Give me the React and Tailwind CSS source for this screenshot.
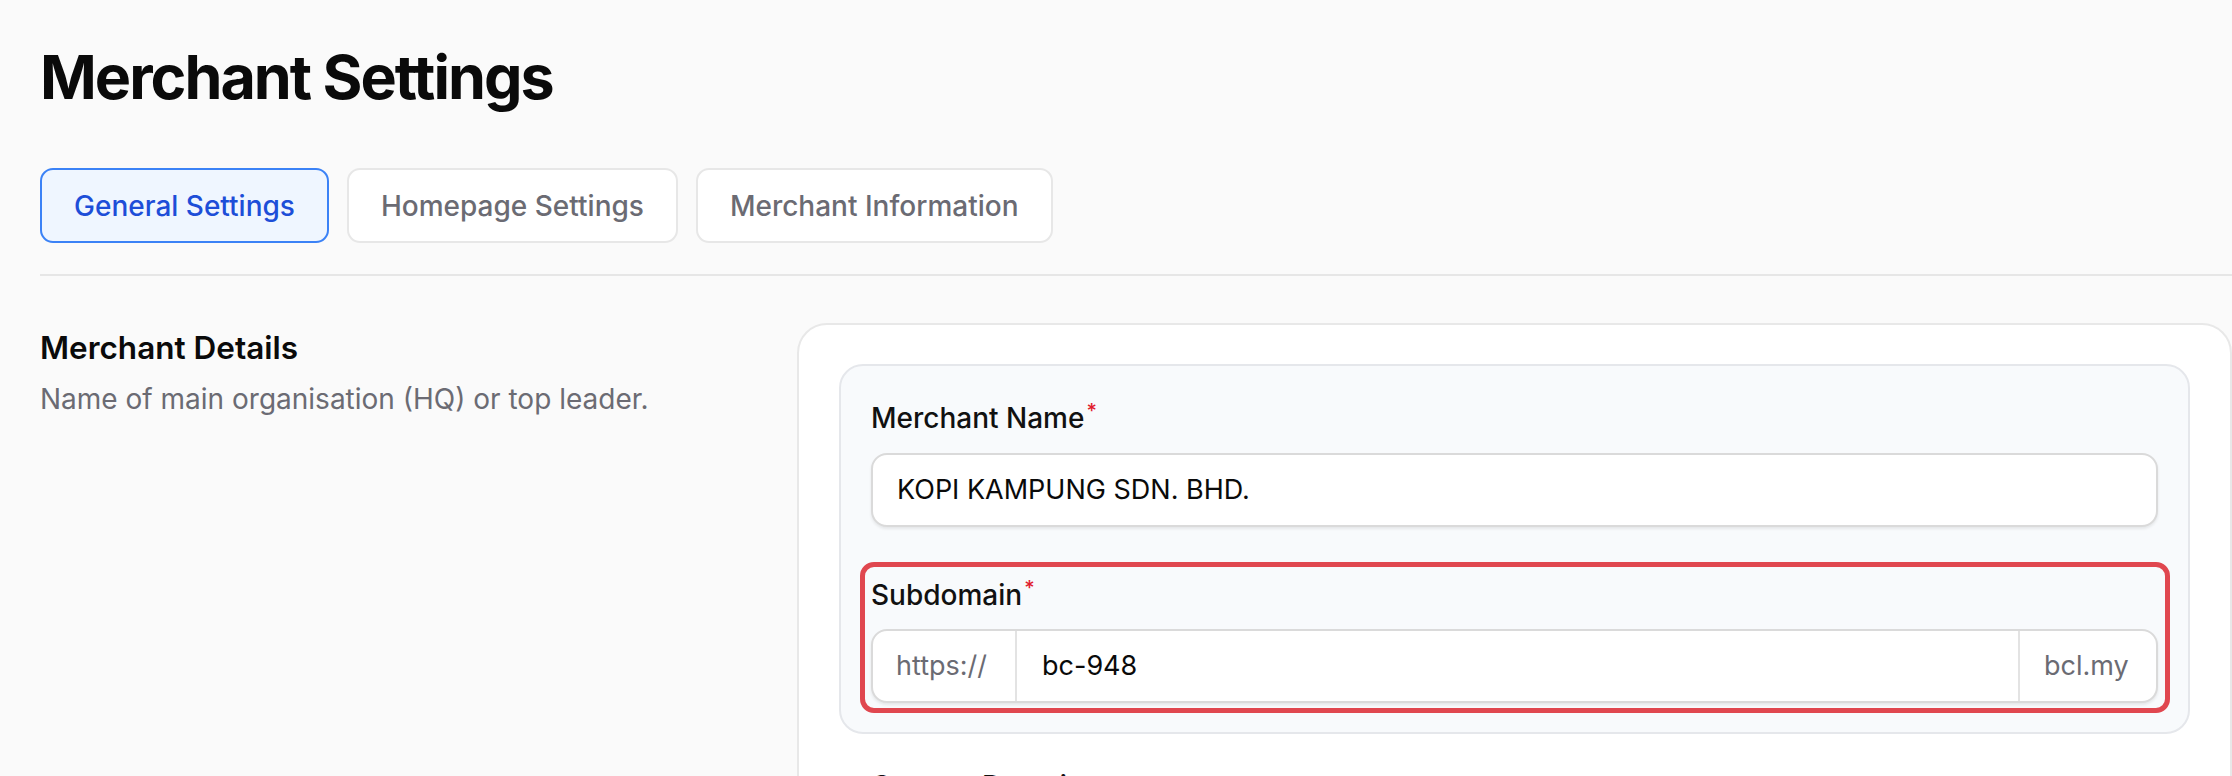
import React from "react";

function Label({ children, required = true }) {
  return (
    <div className="text-[28px] leading-[40px] font-medium text-[#111111]">
      {children}
      {required && (
        <span className="ml-[2px] align-super text-[20px] leading-none text-[#e11d2e]">*</span>
      )}
    </div>
  );
}

export default function App() {
  return (
    <div
      className="h-screen overflow-hidden bg-[#fafafa] pl-[40px]"
      style={{ fontFamily: "Inter, 'Noto Sans', sans-serif" }}
    >
      <h1 className="pt-[42px] text-[61px] leading-[70px] font-bold tracking-[-2px] text-[#0a0a0a]">
        Merchant Settings
      </h1>

      <div className="mt-[56px] flex gap-[18px]">
        <button className="flex h-[75px] items-center rounded-[13px] border-2 border-[#3b82f6] bg-[#eff6ff] px-[32px] text-[28px] font-medium text-[#1d4ed8]">
          General Settings
        </button>
        <button className="flex h-[75px] items-center rounded-[13px] border-2 border-[#e7e7e7] bg-white px-[32px] text-[28px] font-medium text-[#6b6b73]">
          Homepage Settings
        </button>
        <button className="flex h-[75px] items-center rounded-[13px] border-2 border-[#e7e7e7] bg-white px-[32px] text-[28px] font-medium text-[#6b6b73]">
          Merchant Information
        </button>
      </div>

      <div className="mt-[31px] h-[2px] bg-[#e6e6e6]" />

      <div className="mt-[47px] flex">
        <div className="w-[757px] flex-none pt-[5px]">
          <h2 className="text-[31.5px] leading-[40px] font-semibold text-[#0a0a0a]">Merchant Details</h2>
          <p className="mt-[11px] text-[28px] leading-[40px] text-[#6b6b73]">
            Name of main organisation (HQ) or top leader.
          </p>
        </div>

        <div className="flex-1 rounded-[30px] border-2 border-[#e8e8e8] bg-white px-[40px] pt-[39px]">
          <div className="rounded-[24px] border-2 border-[#e5e7eb] bg-[#f8fafc] px-[30px] pt-[32px] pb-[29px]">
            <Label>Merchant Name</Label>
            <div className="mt-[15px] flex h-[74px] items-center rounded-[16px] border-2 border-[#dadada] bg-white px-[24px] text-[27px] text-[#0a0a0a] shadow-[0_2px_3px_rgba(0,0,0,0.08)]">
              KOPI KAMPUNG SDN. BHD.
            </div>

            <div className="relative mt-[48px]">
              <Label>Subdomain</Label>
              <div className="mt-[14px] flex h-[74px] items-stretch overflow-hidden rounded-[16px] border-2 border-[#dadada] bg-white text-[27px] shadow-[0_2px_3px_rgba(0,0,0,0.08)]">
                <div className="flex w-[144px] flex-none items-center border-r-2 border-[#e3e3e3] pl-[23px] text-[#6b6b73]">
                  https://
                </div>
                <div className="flex flex-1 items-center pl-[25px] text-[#0a0a0a]">bc-948</div>
                <div className="flex w-[138px] flex-none items-center border-l-2 border-[#e3e3e3] pl-[24px] text-[#6b6b73]">
                  bcl.my
                </div>
              </div>
              <div className="pointer-events-none absolute -top-[13px] -right-[12px] -bottom-[10px] -left-[11px] rounded-[14px] border-[5px] border-[#e0474f]" />
            </div>
          </div>

          <div className="mt-[32px] px-[32px]">
            <Label required={false}>Custom Domain</Label>
            <div className="mt-[15px] h-[74px] rounded-[16px] border-2 border-[#dadada] bg-white" />
          </div>
        </div>
      </div>
    </div>
  );
}
